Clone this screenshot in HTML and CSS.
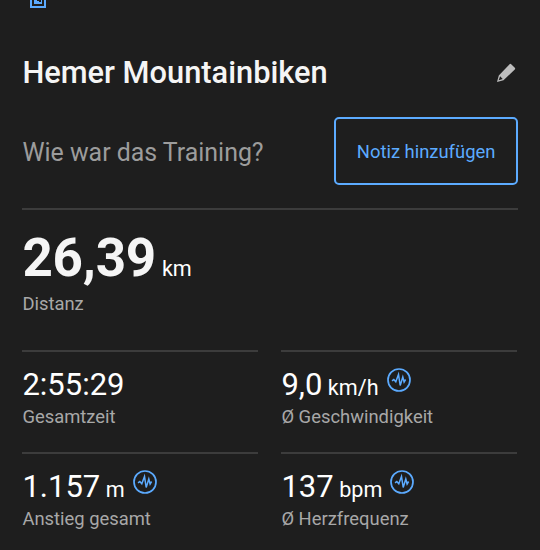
FILE: index.html
```
<!DOCTYPE html>
<html lang="de">
<head>
  <meta charset="utf-8">
  <title>Hemer Mountainbiken</title>
  <link rel="stylesheet" href="styles.css">
</head>
<body>
<svg class="symbols">
  <symbol id="pulse" viewBox="0 0 24 24">
    <circle cx="12" cy="12" r="11" stroke-width="1.7"/>
    <path d="M5 12.800l1.800-1.200 2 2.200 2.700-7.300 1.700 11 2.600-8.500 1.300 5 1.500-2.500" stroke-width="1.5"/>
  </symbol>
</svg>
<div class="container">
  <div class="top">
    <svg class="photo" viewBox="0 0 16 8">
      <path d="M1 0v7h14V0" fill="none" stroke="#5cabff" stroke-width="2"/>
      <path d="M4 0h3v1h2v1h2V0h1v4H4z" fill="#5cabff"/>
    </svg>
  </div>
  <div class="title">
    <h1>Hemer Mountainbiken</h1>
    <svg class="pencil" viewBox="0 0 20 20">
      <path d="M1 19l1.800-6.500L13.600 1.200q.8-.8 1.600 0l3.600 3.600q.8.800 0 1.600L7.500 17.200z" fill="#bdbdbd"/>
      <path d="M2.700 17.300l1.400-4 2.600 2.600z" fill="#1e1e1e"/>
    </svg>
  </div>
  <div class="note">
    <p>Wie war das Training?</p>
    <button>Notiz hinzufügen</button>
  </div>
  <div class="distance">
    <div class="value">26,39<span>km</span></div>
    <div class="label">Distanz</div>
  </div>
  <div class="stats">
    <div class="stat">
      <div class="value">2:55:29</div>
      <div class="label">Gesamtzeit</div>
    </div>
    <div class="stat">
      <div class="value">9,0<span>km/h</span><svg class="pulse"><use href="#pulse"/></svg></div>
      <div class="label">Ø Geschwindigkeit</div>
    </div>
    <div class="stat">
      <div class="value">1.157<span>m</span><svg class="pulse"><use href="#pulse"/></svg></div>
      <div class="label">Anstieg gesamt</div>
    </div>
    <div class="stat">
      <div class="value">137<span>bpm</span><svg class="pulse"><use href="#pulse"/></svg></div>
      <div class="label">Ø Herzfrequenz</div>
    </div>
  </div>
</div>
</body>
</html>
```
FILE: styles.css
```
* {
  box-sizing: border-box;
}
body {
  margin: 0;
  background-color: #1e1e1e;
  color: #fff;
  font-family: Roboto, sans-serif;
}
.symbols {
  display: none;
}
.container {
  height: 550px;
  padding: 0 22.4px;
  overflow: hidden;
}
.top {
  height: 53px;
  padding-left: 8px;
}
.photo {
  display: block;
  width: 16px;
  height: 8px;
}
.title {
  display: flex;
  justify-content: space-between;
  align-items: center;
  height: 40px;
}
h1 {
  margin: 0;
  font-size: 30.8px;
  font-weight: 500;
  line-height: 40px;
  color: #f5f5f5;
}
.pencil {
  width: 20px;
  height: 20px;
  margin: 0 1.5px 1px 0;
}
.note {
  display: flex;
  justify-content: space-between;
  align-items: center;
  height: 117px;
  border-bottom: 2px solid #3c3c3c;
}
.note p {
  margin: 3px 0 0;
  font-size: 24.9px;
  color: #9c9c9c;
}
button {
  width: 184px;
  height: 68px;
  margin-top: 1px;
  padding: 0 0 0 1px;
  border: 2px solid #5cabff;
  border-radius: 5px;
  background: none;
  color: #5cabff;
  font-family: Roboto, sans-serif;
  font-size: 18.4px;
}
.value {
  display: flex;
  align-items: baseline;
}
.value span {
  margin-left: 6px;
  font-size: 21.6px;
}
.label {
  font-size: 18.4px;
  line-height: 24px;
  color: #a8a8a8;
}
.distance {
  height: 140px;
  padding-top: 16px;
}
.distance .value {
  height: 66px;
  font-size: 53px;
  font-weight: bold;
  line-height: 64px;
  letter-spacing: -0.2px;
  color: #f5f5f5;
}
.distance .value span {
  color: #fff;
  font-weight: normal;
}
.stats {
  display: grid;
  grid-template-columns: 236px 236px;
  column-gap: 23px;
}
.stat {
  height: 101.5px;
  padding-top: 14px;
  border-top: 2px solid #3c3c3c;
}
.stat .value {
  height: 39px;
  font-size: 31px;
  line-height: 38px;
}
.stat .value span {
  margin-left: 5.5px;
}
.pulse {
  align-self: flex-start;
  width: 24px;
  height: 24px;
  margin: 2px 0 0 8px;
  fill: none;
  stroke: #5cabff;
}
```
